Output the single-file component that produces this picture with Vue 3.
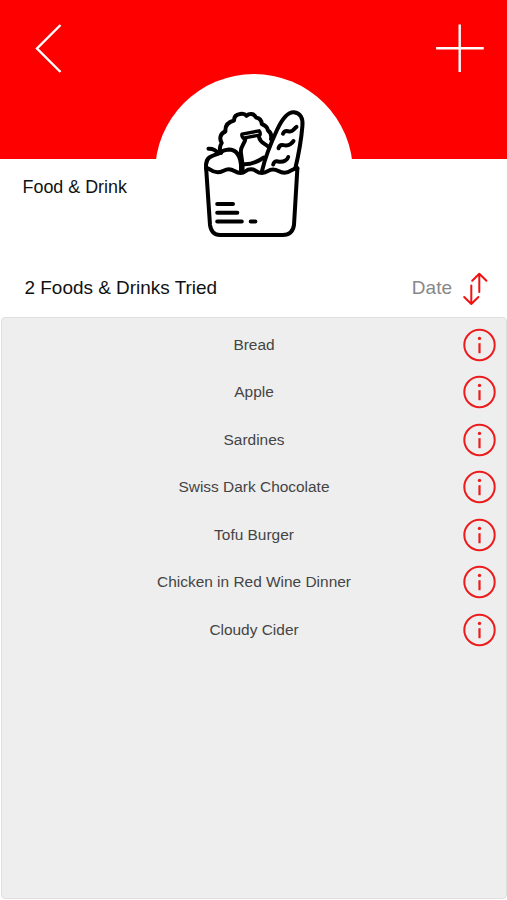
<script setup>
const items = [
  'Bread',
  'Apple',
  'Sardines',
  'Swiss Dark Chocolate',
  'Tofu Burger',
  'Chicken in Red Wine Dinner',
  'Cloudy Cider',
]
</script>

<template>
  <main class="screen">
    <header class="header">
      <nav class="bar">
        <svg class="nav-icon" viewBox="0 0 50 50"><path d="M26.5 1 L3 24.5 L26.5 48" /></svg>
        <svg class="nav-icon plus" viewBox="0 0 50 50"><path d="M24.7 .5 V48.1 M1.1 24.3 H48.7" /></svg>
      </nav>
      <div class="badge">
        <svg class="bag" viewBox="195 100 120 145">
          <path d="M206.2 169 L210 225 Q211.5 235 220 235 H283 Q292.5 235 294 225 L297.4 168.2" />
          <path d="M206.2 168 C210 168 211 172.3 217.5 172.3 C223 172.3 224 169.2 228.8 169.2 C234 169.2 235 173 240.5 173 C246 173 245 169.3 251 169.3 C256.5 169.3 256 173 262 173 C268 173 267.5 169.5 273 169.5 C278.5 169.5 278.5 172.8 284.5 172.8 C291 172.8 291.5 168.2 297.4 168.2" />
          <path d="M206.3 169 C205.4 163 206.5 157.5 213 155.6 C220 154 221 149.8 228.5 149.5 C237 149.5 240.8 157 241.2 168 V172" />
          <path d="M208.5 148.7 C213 148.5 216 150 218.5 153.5" />
          <path d="M221 153 C219.3 149.5 219 147 221.7 143 C219.3 139 219.8 133.5 225.4 131.5 C225 126 228 122 234 120.5 C234 117 236 114.5 240 114 C243 113.2 245 114 246.5 115.8 C249 113.3 254 113 256 117.5 C259.5 118 261.5 120.5 261.8 124 C266 125.5 267.5 127.5 268 130.5 C271 132.5 271.8 135 271 139" />
          <path class="lid" d="M242 134.2 L259.2 130.8 Q260.7 132.5 260 135 L243.2 138.2 Q241.3 136 242 134.2 Z" />
          <path d="M245.3 139 C244.8 144 240.8 145.5 240.8 152 L242.5 164.2 C251 165 258 161.5 264 157.5 M259 137 C260 142.5 264 143 267.5 146" />
          <path d="M262 171 C265 158 270 145 277 130 C283 117 288 111.7 294 112.2 C300 112.6 303.3 118 302.4 126 C301 143 298.5 155 295.3 168.5" />
          <path d="M283 133.7 Q284.5 130.3 288 131.2 T293.5 129.8 T296.5 126.8 M278.5 148.3 Q279.5 144.2 283.5 145.1 T290 144.4 T293.5 141 M273.2 164.5 Q273.8 160.7 278 161.5 T285 160.7 T288.2 157" />
          <path d="M217.2 204 H233 M217.2 212.8 H237.3 M217.2 221.6 H241.8 M250.7 221.6 H255.4" />
          <path d="M241.8 165 V171" class="heavy" />
        </svg>
      </div>
      <h1 class="title">Food &amp; Drink</h1>
    </header>
    <section class="summary">
      <h2 class="count">2 Foods &amp; Drinks Tried</h2>
      <span class="sort">Date</span>
      <svg class="sort-icon" viewBox="0 0 28 36"><path d="M9.3 15.5 V34 M2.2 27 L9.3 34 L16.4 27 M17.3 22 V3.7 M10.2 10.7 L17.3 3.7 L24.4 10.7" /></svg>
    </section>
    <ul class="list">
      <li v-for="item in items" :key="item" class="row">
        <span class="name">{{ item }}</span>
        <svg class="info" viewBox="0 0 34 34">
          <circle class="ring" cx="16.5" cy="17" r="15.2" />
          <circle class="dot" cx="16.5" cy="10.4" r="1.7" />
          <path class="stem" d="M16.5 15.2 V25.2" />
        </svg>
      </li>
    </ul>
  </main>
</template>

<style>
body {
  margin: 0;
  background: #fff;
}
</style>

<style scoped>
.screen {
  display: flex;
  flex-direction: column;
  box-sizing: border-box;
  width: 507px;
  height: 900px;
  padding-bottom: 1px;
  overflow: hidden;
  font-family: "Liberation Sans", Arial, sans-serif;
  background: #fff;
}
.header {
  position: relative;
  height: 259px;
  flex: none;
}
.bar {
  display: flex;
  justify-content: space-between;
  box-sizing: border-box;
  height: 158.5px;
  padding: 23.5px 22px 0 33.5px;
  background: #f00;
}
.nav-icon {
  width: 50px;
  height: 50px;
  fill: none;
  stroke: #fff;
  stroke-width: 2.4;
}
.badge {
  position: absolute;
  top: 74px;
  left: 155px;
  width: 198px;
  height: 198px;
  border-radius: 50%;
  background: #fff;
}
.bag {
  display: block;
  width: 120px;
  height: 145px;
  margin: 26px 0 0 40px;
  fill: none;
  stroke: #000;
  stroke-width: 4;
  stroke-linecap: round;
  stroke-linejoin: round;
}
.lid {
  stroke-width: 3.4;
}
.heavy {
  stroke-width: 5.5;
}
.title {
  position: relative;
  margin: 0;
  padding: 18.5px 0 0 22.5px;
  font-size: 17.9px;
  font-weight: 400;
  line-height: 21px;
  color: #111;
}
.summary {
  display: flex;
  align-items: center;
  flex: none;
  height: 58px;
  padding: 0 17px 0 24.5px;
}
.count {
  margin: 0;
  flex: 1;
  font-size: 18.95px;
  font-weight: 400;
  line-height: 22px;
  color: #111;
}
.sort {
  margin-right: 10px;
  font-size: 19px;
  line-height: 22px;
  color: #888;
}
.sort-icon {
  width: 28px;
  height: 36px;
  fill: none;
  stroke: #f01212;
  stroke-width: 2;
  stroke-linecap: round;
  stroke-linejoin: round;
}
.list {
  flex: 1;
  margin: 0 0 0 1px;
  padding: 3px 0 0;
  border: 1px solid #dfdfdf;
  border-radius: 4px;
  background: #eee;
  list-style: none;
}
.row {
  display: grid;
  grid-template-columns: 1fr 34px;
  align-items: center;
  height: 47.5px;
  padding: 0 9.5px 0 43.5px;
}
.name {
  text-align: center;
  font-size: 15.45px;
  color: #444;
}
.info {
  width: 34px;
  height: 34px;
}
.ring,
.stem {
  fill: none;
  stroke: #ec1c1c;
  stroke-width: 2;
}
.stem {
  stroke-width: 2.2;
}
.dot {
  fill: #ec1c1c;
}
</style>
